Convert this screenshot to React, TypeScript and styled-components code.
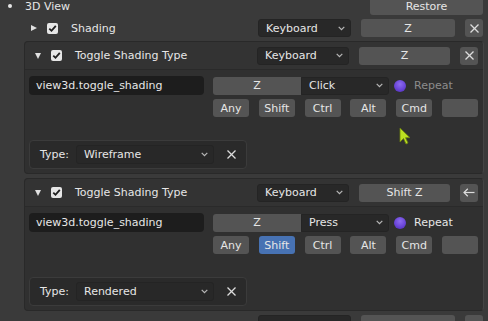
import React from 'react'
import styled, { createGlobalStyle } from 'styled-components'

const GlobalStyle = createGlobalStyle`
  * { box-sizing: border-box; }
  html, body { margin: 0; padding: 0; background: #3a3a3a; }
  body {
    font-family: "DejaVu Sans", "Liberation Sans", sans-serif;
    font-size: 11px;
    color: #e6e6e6;
    overflow: hidden;
  }
`

const Editor = styled.div`
  position: relative;
  width: 488px;
  height: 321px;
  overflow: hidden;
  background: #3a3a3a;
`

const List = styled.div`
  display: flex;
  flex-direction: column;
  gap: 4px;
  margin-top: -3px;
`

const CategoryRow = styled.div`
  display: flex;
  align-items: center;
  height: 18px;
  padding: 0 5px 0 8px;
`

const Bullet = styled.span`
  width: 4px;
  height: 4px;
  border-radius: 50%;
  background: #e6e6e6;
  margin-right: 13px;
`

const ItemRow = styled.div`
  display: flex;
  align-items: center;
  height: 18px;
  padding: 0 5px 0 31px;
  gap: 10px;
`

const Spacer = styled.div`
  flex: 1;
`

const Disclosure = styled.span<{ $open?: boolean }>`
  width: 0;
  height: 0;
  flex-shrink: 0;
  ${p => p.$open
    ? `border-top: 6px solid #e0e0e0; border-left: 3.5px solid transparent; border-right: 3.5px solid transparent;`
    : `border-left: 6px solid #e0e0e0; border-top: 3.5px solid transparent; border-bottom: 3.5px solid transparent;`}
`

const CheckBox = styled.span`
  width: 11px;
  height: 11px;
  flex-shrink: 0;
  border-radius: 2px;
  background: #e6e6e6;
  display: flex;
  align-items: center;
  justify-content: center;
`

const Label = styled.span`
  margin-left: 3px;
  white-space: nowrap;
`

const Dropdown = styled.div<{ $w: number; $join?: boolean }>`
  width: ${p => p.$w}px;
  height: 18px;
  flex-shrink: 0;
  display: flex;
  align-items: center;
  justify-content: space-between;
  padding: 0 5px 0 7px;
  background: #282828;
  border: 1px solid #242424;
  border-radius: ${p => (p.$join ? '0 3px 3px 0' : '3px')};
  white-space: nowrap;
`

const Button = styled.div<{ $w: number; $active?: boolean; $join?: boolean }>`
  width: ${p => p.$w}px;
  height: 18px;
  flex-shrink: 0;
  display: flex;
  align-items: center;
  justify-content: center;
  background: ${p => (p.$active ? '#4772b3' : '#545454')};
  border-radius: ${p => (p.$join ? '3px 0 0 3px' : '3px')};
  color: #e6e6e6;
  white-space: nowrap;
`

const Panel = styled.section`
  margin-left: 24px;
  width: 460px;
  background: #303030;
  border: 1px solid #292929;
  border-right-color: #444;
  border-radius: 4px;
`

const PanelHeader = styled.div`
  display: flex;
  align-items: center;
  gap: 10px;
  height: 28px;
  padding: 0 5px 0 10px;
  background: #333333;
  border-bottom: 1px solid #2a2a2a;
  border-radius: 4px 4px 0 0;
`

const PanelBody = styled.div`
  display: grid;
  grid-template-columns: 175px 265px;
  column-gap: 9px;
  row-gap: 4px;
  padding: 6px 5px 4px 4px;
`

const TextField = styled.div`
  height: 19px;
  display: flex;
  align-items: center;
  padding: 0 7px;
  background: #1d1d1d;
  border-radius: 4px;
`

const OpRow = styled.div`
  display: flex;
  align-items: center;
  height: 19px;
`

const Radio = styled.span`
  width: 12px;
  height: 12px;
  border-radius: 50%;
  margin-left: 5px;
  background: radial-gradient(circle at 50% 35%, #8d6cf0 0%, #6a45d8 55%, #4a2cae 100%);
`

const RepeatText = styled.span<{ $dim?: boolean }>`
  margin-left: 8px;
  color: ${p => (p.$dim ? '#8c8c8c' : '#e6e6e6')};
`

const ModRow = styled.div`
  grid-column: 2;
  display: flex;
  justify-content: space-between;
`

const TypeBox = styled.div`
  grid-column: 1 / -1;
  margin-top: 19px;
  width: 218px;
  height: 29px;
  display: flex;
  align-items: center;
  padding-left: 10px;
  background: #2a2a2a;
  border: 1px solid #3b3b3b;
  border-radius: 4px;
`

const TypeLabel = styled.span`
  margin-right: 7px;
`

const ClearIcon = styled.span`
  margin-left: 13px;
  display: flex;
`

const Cursor = styled.svg`
  position: absolute;
  left: 399px;
  top: 127px;
`

const Chevron = () => (
  <svg width="7" height="5" viewBox="0 0 7 5">
    <polyline points="0.7,0.8 3.5,3.6 6.3,0.8" fill="none" stroke="#b8b8b8" strokeWidth="1.2" />
  </svg>
)

const Check = () => (
  <svg width="9" height="9" viewBox="0 0 9 9">
    <polyline points="1.3,4.6 3.5,6.8 7.8,1.8" fill="none" stroke="#1e1e1e" strokeWidth="1.8" />
  </svg>
)

const XIcon = () => (
  <svg width="9" height="9" viewBox="0 0 9 9">
    <line x1="0.5" y1="0.5" x2="8.5" y2="8.5" stroke="#dcdcdc" strokeWidth="1.2" />
    <line x1="8.5" y1="0.5" x2="0.5" y2="8.5" stroke="#dcdcdc" strokeWidth="1.2" />
  </svg>
)

const ArrowLeft = () => (
  <svg width="12" height="9" viewBox="0 0 12 9">
    <line x1="1" y1="4.5" x2="11.5" y2="4.5" stroke="#dcdcdc" strokeWidth="1.2" />
    <polyline points="4.8,0.8 1,4.5 4.8,8.2" fill="none" stroke="#dcdcdc" strokeWidth="1.2" />
  </svg>
)

type Item = {
  keyName: string
  action: string
  repeat: boolean
  shift: boolean
  type: string
  icon: 'x' | 'arrow'
}

const items: Item[] = [
  { keyName: 'Z', action: 'Click', repeat: false, shift: false, type: 'Wireframe', icon: 'x' },
  { keyName: 'Shift Z', action: 'Press', repeat: true, shift: true, type: 'Rendered', icon: 'arrow' },
]

const ExpandedItem: React.FC<{ item: Item }> = ({ item }) => (
  <Panel>
    <PanelHeader>
      <Disclosure $open />
      <CheckBox><Check /></CheckBox>
      <Label>Toggle Shading Type</Label>
      <Spacer />
      <Dropdown $w={92}>Keyboard<Chevron /></Dropdown>
      <Button $w={91}>{item.keyName}</Button>
      <Button $w={18}>{item.icon === 'x' ? <XIcon /> : <ArrowLeft />}</Button>
    </PanelHeader>
    <PanelBody>
      <TextField>view3d.toggle_shading</TextField>
      <OpRow>
        <Button $w={88} $join>Z</Button>
        <Dropdown $w={88} $join>{item.action}<Chevron /></Dropdown>
        <Radio />
        <RepeatText $dim={!item.repeat}>Repeat</RepeatText>
      </OpRow>
      <ModRow>
        <Button $w={36}>Any</Button>
        <Button $w={36} $active={item.shift}>Shift</Button>
        <Button $w={36}>Ctrl</Button>
        <Button $w={36}>Alt</Button>
        <Button $w={36}>Cmd</Button>
        <Button $w={36} />
      </ModRow>
      <TypeBox>
        <TypeLabel>Type:</TypeLabel>
        <Dropdown $w={138} style={{ height: 19 }}>{item.type}<Chevron /></Dropdown>
        <ClearIcon><XIcon /></ClearIcon>
      </TypeBox>
    </PanelBody>
  </Panel>
)

const App: React.FC = () => (
  <Editor>
    <GlobalStyle />
    <List>
      <CategoryRow>
        <Bullet />
        <span>3D View</span>
        <Spacer />
        <Button $w={113}>Restore</Button>
      </CategoryRow>

      <ItemRow>
        <Disclosure />
        <CheckBox><Check /></CheckBox>
        <Label>Shading</Label>
        <Spacer />
        <Dropdown $w={93}>Keyboard<Chevron /></Dropdown>
        <Button $w={94}>Z</Button>
        <Button $w={18}><XIcon /></Button>
      </ItemRow>

      {items.map((it, i) => <ExpandedItem key={i} item={it} />)}

      <ItemRow>
        <Spacer />
        <Dropdown $w={93} />
        <Button $w={94} />
        <Button $w={18} />
      </ItemRow>
    </List>

    <Cursor width="12" height="19" viewBox="0 0 12 19">
      <polygon points="1,1 1,15 4.5,11.5 7,17 9,16 6.6,10.7 11,10.7" fill="#bde021" stroke="#6a7d10" strokeWidth="0.8" />
    </Cursor>
  </Editor>
)

export default App
